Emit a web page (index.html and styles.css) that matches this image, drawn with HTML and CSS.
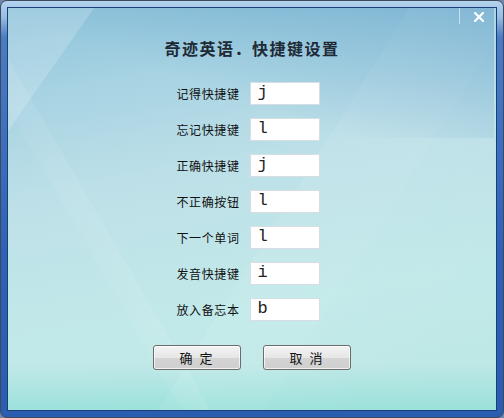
FILE: index.html
```html
<!DOCTYPE html>
<html lang="zh">
<head>
<meta charset="utf-8">
<title>快捷键设置</title>
<link rel="stylesheet" href="styles.css">
</head>
<body>
<div class="win">
  <div class="client">
    <div class="close-area">
      <span class="sep"></span>
      <svg class="close" width="10" height="10" viewBox="0 0 10 10"><path d="M1 1 L9 9 M9 1 L1 9" stroke="#fff" stroke-width="2.2" stroke-linecap="square"/></svg>
    </div>
    <h1 class="title">奇迹英语．快捷键设置</h1>
    <div class="form">
      <label class="lbl">记得快捷键</label><div class="inp">j</div>
      <label class="lbl">忘记快捷键</label><div class="inp">l</div>
      <label class="lbl">正确快捷键</label><div class="inp">j</div>
      <label class="lbl">不正确按钮</label><div class="inp">l</div>
      <label class="lbl">下一个单词</label><div class="inp">l</div>
      <label class="lbl">发音快捷键</label><div class="inp">i</div>
      <label class="lbl">放入备忘本</label><div class="inp">b</div>
    </div>
    <div class="buttons">
      <button class="btn">确 定</button>
      <button class="btn">取 消</button>
    </div>
  </div>
</div>
</body>
</html>
```

FILE: styles.css
```css
html, body { margin: 0; padding: 0; background: #6f87a8; }
body { width: 504px; height: 418px; overflow: hidden; font-family: "Noto Sans CJK SC", "Liberation Sans", sans-serif; }
.win {
  box-sizing: border-box;
  width: 504px; height: 418px;
  border: 1px solid #3c4a5c;
  border-radius: 7px;
  padding: 6px;
  background: linear-gradient(180deg, #b3d3ee 0px, #98bde2 16px, #4a7cc4 36px, #2f62b6 60%, #2a5cb0 100%);
}
.client {
  box-sizing: border-box;
  position: relative;
  height: 404px;
  border: 1px solid #1d3f78;
  display: flex; flex-direction: column; align-items: center;
  background:
    linear-gradient(122deg, rgba(255,255,255,0) 0px, rgba(255,255,255,0.0) 340px, rgba(255,255,255,0.07) 341px, rgba(255,255,255,0.07) 430px, rgba(255,255,255,0.03) 431px, rgba(255,255,255,0.0) 560px),
    linear-gradient(60deg, rgba(255,255,255,0) 0px, rgba(255,255,255,0) 150px, rgba(255,255,255,0.05) 151px, rgba(255,255,255,0.08) 175px, rgba(255,255,255,0) 176px),
    linear-gradient(180deg, rgba(110,215,205,0) 355px, rgba(110,215,205,0.4) 400px),
    linear-gradient(170deg, #8cc2da 0%, #a6d2e2 18%, #bde0e8 40%, #c2e9e9 70%, #bbe8e4 100%);
}
.client::before {
  content: ""; position: absolute; left: 0; top: 0; width: 486px; height: 130px;
  background:
    linear-gradient(125deg, rgba(255,255,255,0.18) 0px, rgba(255,255,255,0.18) 70px, rgba(255,255,255,0) 71px),
    linear-gradient(200deg, rgba(70,140,190,0.4) 0%, rgba(70,140,190,0) 60%);
  pointer-events: none;
}
.close-area { position: absolute; top: 0; right: 12px; display: flex; align-items: center; gap: 14px; height: 16px; z-index: 1; }
.sep { width: 1px; height: 16px; background: rgba(255,255,255,0.55); }
.close { margin-top: 2px; }
.title {
  position: relative;
  margin: 29px 0 0 0;
  font-size: 16px; font-weight: bold; line-height: 22px;
  letter-spacing: 1.5px;
  color: #1e2a36;
}
.form {
  position: relative;
  margin-top: 23px;
  display: grid;
  grid-template-columns: auto 70px;
  column-gap: 10px;
  row-gap: 13px;
  align-items: center;
  margin-left: -8px;
}
.lbl { font-size: 12px; letter-spacing: 0.6px; color: #111; text-align: right; line-height: 23px; }
.inp {
  box-sizing: border-box;
  height: 23px;
  background: #fff;
  border: 1px solid #d6dde3;
  font-family: "Liberation Mono", "DejaVu Sans Mono", monospace;
  font-size: 17px; line-height: 20px;
  padding-left: 7px;
  color: #222;
}
.buttons { position: relative; display: flex; gap: 22px; margin-top: 24px; }
.btn {
  box-sizing: border-box;
  width: 88px; height: 25px;
  border: 1px solid #6c6c6c;
  border-radius: 3px;
  background: linear-gradient(180deg, #f4f4f4 0%, #e6e6e6 50%, #d4d4d4 51%, #cfcfcf 100%);
  box-shadow: inset 0 0 0 1px rgba(255,255,255,0.7);
  font-family: "Noto Sans CJK SC", sans-serif;
  font-size: 13px; letter-spacing: 2px; color: #111;
  padding: 0; line-height: 22px;
}
```
